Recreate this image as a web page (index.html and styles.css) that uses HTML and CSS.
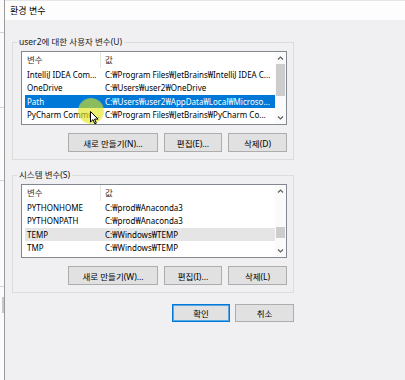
FILE: index.html
```
<!DOCTYPE html>
<html lang="ko">
<head>
    <meta charset="UTF-8">
    <meta name="viewport" content="width=device-width, initial-scale=1.0">
    <title>환경 변수</title>
    <link rel="stylesheet" href="styles.css">
</head>
<body>
    <div class="screen">
        <div class="behind">
            <div class="behind-line line-a"></div>
            <div class="behind-line line-b"></div>
            <div class="behind-line line-c"></div>
            <div class="behind-line line-d"></div>
            <div class="behind-block"></div>
        </div>
        <div class="dialog">
            <div class="titlebar">환경 변수</div>
            <div class="content">
                <fieldset class="group">
                    <legend>user2에 대한 사용자 변수(U)</legend>
                    <div class="list">
                        <div class="list-body">
                            <div class="list-head">
                                <span class="cell-name">변수</span>
                                <span class="cell-value">값</span>
                            </div>
                            <div class="row"><span class="cell-name">IntelliJ IDEA Com...</span><span class="cell-value">C:₩Program Files₩JetBrains₩IntelliJ IDEA C...</span></div>
                            <div class="row"><span class="cell-name">OneDrive</span><span class="cell-value">C:₩Users₩user2₩OneDrive</span></div>
                            <div class="row selected"><span class="cell-name">Path</span><span class="cell-value">C:₩Users₩user2₩AppData₩Local₩Microso...</span></div>
                            <div class="row"><span class="cell-name">PyCharm Commu...</span><span class="cell-value">C:₩Program Files₩JetBrains₩PyCharm Co...</span></div>
                        </div>
                        <div class="scrollbar">
                            <svg class="arrow" width="11" height="12" viewBox="0 0 11 12"><path d="M3 7.5 L5.5 5 L8 7.5" fill="none" stroke="#606060" stroke-width="1.2"/></svg>
                            <div class="track"><div class="thumb thumb-user"></div></div>
                            <svg class="arrow" width="11" height="12" viewBox="0 0 11 12"><path d="M3 4.5 L5.5 7 L8 4.5" fill="none" stroke="#606060" stroke-width="1.2"/></svg>
                        </div>
                    </div>
                    <div class="buttons">
                        <button class="btn btn-new">새로 만들기(N)...</button>
                        <button class="btn btn-edit">편집(E)...</button>
                        <button class="btn btn-del">삭제(D)</button>
                    </div>
                </fieldset>

                <fieldset class="group group-system">
                    <legend>시스템 변수(S)</legend>
                    <div class="list">
                        <div class="list-body">
                            <div class="list-head">
                                <span class="cell-name">변수</span>
                                <span class="cell-value">값</span>
                            </div>
                            <div class="row"><span class="cell-name">PYTHONHOME</span><span class="cell-value">C:₩prod₩Anaconda3</span></div>
                            <div class="row"><span class="cell-name">PYTHONPATH</span><span class="cell-value">C:₩prod₩Anaconda3</span></div>
                            <div class="row hovered"><span class="cell-name">TEMP</span><span class="cell-value">C:₩Windows₩TEMP</span></div>
                            <div class="row"><span class="cell-name">TMP</span><span class="cell-value">C:₩Windows₩TEMP</span></div>
                        </div>
                        <div class="scrollbar">
                            <svg class="arrow" width="11" height="12" viewBox="0 0 11 12"><path d="M3 7.5 L5.5 5 L8 7.5" fill="none" stroke="#606060" stroke-width="1.2"/></svg>
                            <div class="track"><div class="thumb thumb-system"></div></div>
                            <svg class="arrow" width="11" height="12" viewBox="0 0 11 12"><path d="M3 4.5 L5.5 7 L8 4.5" fill="none" stroke="#606060" stroke-width="1.2"/></svg>
                        </div>
                    </div>
                    <div class="buttons">
                        <button class="btn btn-new">새로 만들기(W)...</button>
                        <button class="btn btn-edit">편집(I)...</button>
                        <button class="btn btn-del">삭제(L)</button>
                    </div>
                </fieldset>

                <div class="dialog-buttons">
                    <button class="btn btn-ok">확인</button>
                    <button class="btn btn-cancel">취소</button>
                </div>
            </div>
        </div>

        <div class="click-mark"></div>
        <svg class="cursor" width="9" height="14" viewBox="0 0 9 14">
            <path d="M0.5 0.5 L0.5 11 L3 8.6 L4.8 12.8 L6.3 12.2 L4.6 8.1 L8 8.1 Z" fill="#fff" stroke="#000" stroke-width="1" stroke-linejoin="round"/>
        </svg>
    </div>
</body>
</html>
```

FILE: styles.css
```
* {
    box-sizing: border-box;
}
body {
    margin: 0;
    font-family: "Noto Sans", "Noto Sans CJK KR", sans-serif;
    font-size: 8.5px;
    color: #000;
}
.screen {
    position: relative;
    display: flex;
    width: 405px;
    height: 380px;
    overflow: hidden;
    background-color: #f0eff2;
}

/* window behind the dialog */
.behind {
    position: relative;
    width: 4px;
    flex-shrink: 0;
    background-color: #fbfbfb;
}
.behind-line {
    height: 1px;
    background-color: #d4d4d4;
}
.line-a { margin-top: 32px; }
.line-b { margin-top: 74px; }
.line-c { margin-top: 72px; }
.line-d { margin-top: 105px; }
.behind-block {
    margin-top: 10px;
    margin-left: 2px;
    width: 2px;
    height: 16px;
    background-color: #c8c8c8;
}

.dialog {
    flex: 1;
    border-left: 1px solid #9a9a9a;
    display: flex;
    flex-direction: column;
}
.titlebar {
    height: 20px;
    padding-left: 5px;
    line-height: 20px;
    font-size: 9px;
    background-color: #fdfdfd;
    border-top: 1px solid #e6e6e6;
}
.content {
    padding: 16px 0 0 7px;
    width: 289px;
}

/* group boxes */
.group {
    margin: 0;
    padding: 3px 6px 7px 8px;
    border: 1px solid #dcdcdc;
    width: 282px;
}
.group legend {
    margin-left: -4px;
    padding: 0 2px;
    line-height: 12px;
    color: #1a1a1a;
}
.group-system {
    margin-top: 9px;
}

/* list views */
.list {
    display: flex;
    height: 74px;
    border: 1px solid #828790;
    background-color: #fff;
}
.list-body {
    flex: 1;
    overflow: hidden;
    font-size: 8px;
}
.list-head,
.row {
    display: grid;
    grid-template-columns: 75px 1fr;
    margin-left: 3px;
    white-space: nowrap;
}
.list-head {
    height: 16px;
    line-height: 16px;
    font-size: 8.5px;
    color: #333;
}
.list-head .cell-value {
    border-left: 1px solid #e5e5e5;
    padding-left: 4px;
}
.row {
    height: 13.3px;
    line-height: 13.3px;
}
.cell-name {
    padding-left: 2px;
    overflow: hidden;
}
.cell-value {
    padding-left: 5px;
    overflow: hidden;
}
.row.selected {
    background-color: #0078d7;
    color: #fff;
}
.row.hovered {
    background-color: #e5e5e5;
}

.scrollbar {
    width: 11px;
    display: flex;
    flex-direction: column;
    background-color: #fafafa;
}
.arrow {
    display: block;
}
.track {
    flex: 1;
    padding: 0 1px;
}
.thumb {
    background-color: #cdcdcd;
}
.thumb-user {
    height: 32px;
}
.thumb-system {
    margin-top: 30px;
    height: 11px;
}

/* buttons */
.buttons {
    display: flex;
    justify-content: flex-end;
    gap: 6px;
    margin-top: 8px;
}
.btn {
    height: 19px;
    padding: 0;
    font-family: inherit;
    font-size: 8.5px;
    color: #000;
    background-color: #e1e1e1;
    border: 1px solid #adadad;
}
.btn-new { width: 90px; }
.btn-edit { width: 58px; }
.btn-del { width: 59px; }

.dialog-buttons {
    display: flex;
    justify-content: flex-end;
    gap: 5px;
    margin-top: 11px;
}
.btn-ok,
.btn-cancel {
    height: 18px;
}
.btn-ok {
    width: 58px;
    border-color: #0078d7;
    box-shadow: inset 0 0 0 1px #5aa7e6;
}
.btn-cancel {
    width: 59px;
}

/* pointer overlay */
.click-mark {
    position: absolute;
    left: 78px;
    top: 98px;
    width: 26px;
    height: 26px;
    border-radius: 50%;
    background: radial-gradient(circle, rgba(225, 230, 20, 0.62) 60%, rgba(235, 235, 60, 0.35) 100%);
}
.cursor {
    position: absolute;
    left: 90px;
    top: 111px;
}
```
